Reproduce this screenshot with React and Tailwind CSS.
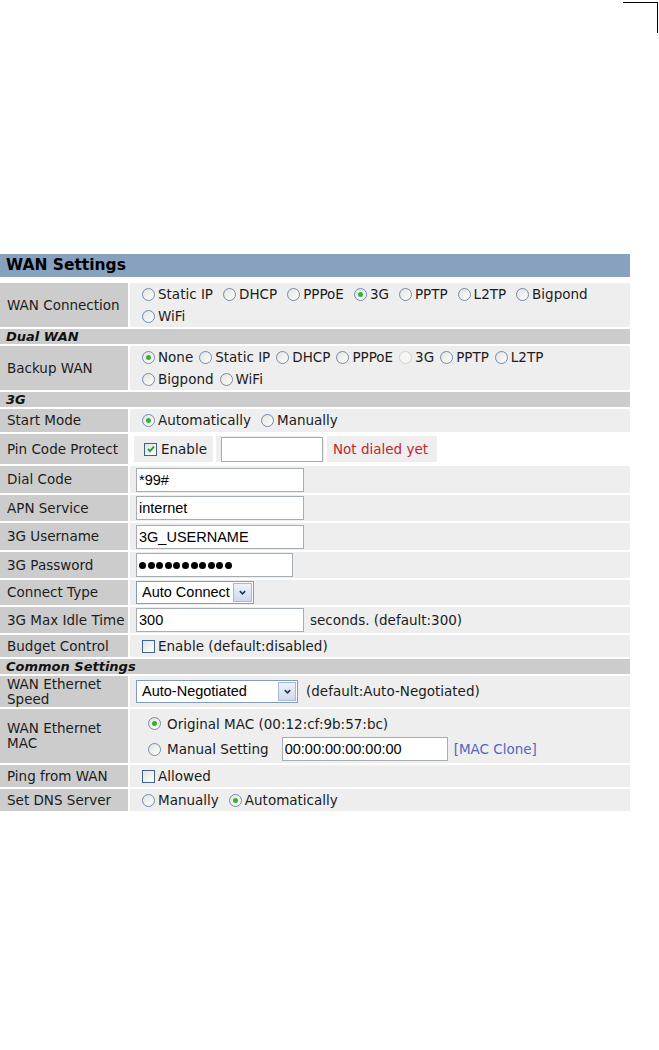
import React from "react";

function Radio({ checked, disabled }) {
  return (
    <span
      className={`inline-flex h-[13px] w-[13px] shrink-0 items-center justify-center rounded-full border ${
        disabled ? "border-[#d2d1ca] bg-[#f6f6f3]" : "border-[#6f8bb0] bg-[linear-gradient(135deg,#e2e2dd,#ffffff)]"
      }`}
    >
      {checked && <span className="h-[5px] w-[5px] rounded-full bg-[#36b036]" />}
    </span>
  );
}

function Check({ checked }) {
  return (
    <span className="inline-flex h-[13px] w-[13px] shrink-0 items-center justify-center border border-[#3f6390] bg-[linear-gradient(135deg,#e2e2dd,#ffffff)]">
      {checked && (
        <svg viewBox="0 0 11 11" className="h-[10px] w-[10px]">
          <path d="M2.2 5.4 L4.4 7.8 L8.8 2.8" stroke="#21a121" strokeWidth="2" fill="none" />
        </svg>
      )}
    </span>
  );
}

function Opt({ label, checked, disabled, gap }) {
  return (
    <span className={`inline-flex items-center ${gap ?? "gap-[3px]"}`}>
      <Radio checked={checked} disabled={disabled} />
      <span>{label}</span>
    </span>
  );
}

function TextInput({ value, w, h }) {
  return (
    <input
      readOnly
      value={value}
      className={`${w} ${h} border border-[#a5acb2] bg-white px-[2px] font-['Liberation_Sans',Arial,sans-serif] text-[14.5px] text-black outline-none`}
    />
  );
}

function Chevron() {
  return (
    <svg viewBox="0 0 10 10" className="h-[9px] w-[9px]">
      <path d="M2 3.5 L5 6.5 L8 3.5" stroke="#24385f" strokeWidth="1.8" fill="none" />
    </svg>
  );
}

function Select({ value, w, btn }) {
  return (
    <div className={`flex h-[23px] items-center border border-[#7f9db9] bg-white pl-[5px] ${w}`}>
      <span className="flex-1 font-['Liberation_Sans',Arial,sans-serif] text-[14.5px] leading-none text-black">{value}</span>
      <span className={`mr-[1px] flex h-[19px] items-center justify-center border border-[#a9b7d6] bg-[linear-gradient(180deg,#eef2fb,#cfd9ef)] ${btn}`}>
        <Chevron />
      </span>
    </div>
  );
}

function Row({ label, h, children, vcls }) {
  return (
    <div className={`flex gap-[2px] ${h}`}>
      <div className="flex w-[128px] shrink-0 items-center bg-[#cccccc] pl-[7px] leading-[15px]">{label}</div>
      <div className={`flex flex-1 ${vcls ?? "items-center bg-[#eeeeee] pl-[12px]"}`}>{children}</div>
    </div>
  );
}

function Section({ title }) {
  return (
    <div className="flex h-[15px] items-center bg-[#cccccc] pl-[6px] text-[13px] font-bold italic leading-none text-[#111]">
      {title}
    </div>
  );
}

export default function App() {
  return (
    <div className="min-h-[1050px] w-[659px] bg-white font-['DejaVu_Sans',Verdana,sans-serif] text-[13.5px] text-[#1c1c1c]">
      <div className="flex justify-end pr-[1px] pt-[2px]">
        <div className="h-[31px] w-[35px] border-r-[1.5px] border-t-[1.5px] border-black" />
      </div>

      <div className="mt-[221px] w-[630px]">
        <div className="flex h-[23px] items-center bg-[#87a1bf] pl-[6px] text-[15.5px] font-bold text-black">
          WAN Settings
        </div>

        <div className="mt-[6px] flex flex-col gap-[2px]">
          <Row label="WAN Connection" h="h-[44px]" vcls="flex-col justify-center bg-[#eeeeee] pl-[12px]">
            <div className="flex h-[22px] items-center gap-[10px]">
              <Opt label="Static IP" />
              <Opt label="DHCP" />
              <Opt label="PPPoE" />
              <Opt label="3G" checked />
              <Opt label="PPTP" />
              <Opt label="L2TP" />
              <Opt label="Bigpond" />
            </div>
            <div className="flex h-[22px] items-center gap-[10px]">
              <Opt label="WiFi" />
            </div>
          </Row>

          <Section title="Dual WAN" />

          <Row label="Backup WAN" h="h-[44px]" vcls="flex-col justify-center bg-[#eeeeee] pl-[12px]">
            <div className="flex h-[22px] items-center gap-[6px]">
              <Opt label="None" checked />
              <Opt label="Static IP" />
              <Opt label="DHCP" />
              <Opt label="PPPoE" />
              <Opt label="3G" disabled />
              <Opt label="PPTP" />
              <Opt label="L2TP" />
            </div>
            <div className="flex h-[22px] items-center gap-[6px]">
              <Opt label="Bigpond" />
              <Opt label="WiFi" />
            </div>
          </Row>

          <Section title="3G" />

          <Row label="Start Mode" h="h-[23px]" vcls="items-center gap-[10px] bg-[#eeeeee] pl-[12px]">
            <Opt label="Automatically" checked />
            <Opt label="Manually" />
          </Row>

          <Row label="Pin Code Protect" h="h-[30px]" vcls="items-center gap-[3px] bg-white pl-[4px]">
            <div className="flex h-[26px] w-[79px] items-center gap-[4px] bg-[#eeeeee] pl-[10px]">
              <Check checked />
              <span>Enable</span>
            </div>
            <div className="flex h-[26px] w-[108px] items-center bg-[#eeeeee] pl-[5px]">
              <TextInput value="" w="w-[102px]" h="h-[25px]" />
            </div>
            <div className="flex h-[26px] w-[110px] items-center bg-[#eeeeee] pl-[6px] text-[#c0262c]">
              Not dialed yet
            </div>
          </Row>

          <Row label="Dial Code" h="h-[27px]" vcls="items-center bg-[#eeeeee] pl-[6px]">
            <TextInput value="*99#" w="w-[168px]" h="h-[24px]" />
          </Row>

          <Row label="APN Service" h="h-[26px]" vcls="items-center bg-[#eeeeee] pl-[6px]">
            <TextInput value="internet" w="w-[168px]" h="h-[24px]" />
          </Row>

          <Row label="3G Username" h="h-[27px]" vcls="items-center bg-[#eeeeee] pl-[6px]">
            <TextInput value="3G_USERNAME" w="w-[168px]" h="h-[24px]" />
          </Row>

          <Row label="3G Password" h="h-[26px]" vcls="items-center bg-[#eeeeee] pl-[6px]">
            <div className="flex h-[24px] w-[157px] items-center gap-[1.6px] border border-[#a5acb2] bg-white pl-[2px]">
              {Array.from({ length: 11 }).map((_, i) => (
                <span key={i} className="h-[7px] w-[7px] rounded-full bg-black" />
              ))}
            </div>
          </Row>

          <Row label="Connect Type" h="h-[25px]" vcls="items-center bg-[#eeeeee] pl-[6px]">
            <Select value="Auto Connect" w="w-[118px]" btn="w-[19px]" />
          </Row>

          <Row label="3G Max Idle Time" h="h-[26px]" vcls="items-center bg-[#eeeeee] pl-[6px]">
            <TextInput value="300" w="w-[168px]" h="h-[24px]" />
            <span className="ml-[6px]">seconds. (default:300)</span>
          </Row>

          <Row label="Budget Control" h="h-[22px]" vcls="items-center gap-[3px] bg-[#eeeeee] pl-[12px]">
            <Check />
            <span>Enable (default:disabled)</span>
          </Row>

          <Section title="Common Settings" />

          <Row
            label={
              <span>
                WAN Ethernet
                <br />
                Speed
              </span>
            }
            h="h-[31px]"
            vcls="items-center bg-[#eeeeee] pl-[6px]"
          >
            <Select value="Auto-Negotiated" w="w-[162px]" btn="w-[18px]" />
            <span className="ml-[8px]">(default:Auto-Negotiated)</span>
          </Row>

          <Row
            label={
              <span>
                WAN Ethernet
                <br />
                MAC
              </span>
            }
            h="h-[54px]"
            vcls="flex-col bg-[#eeeeee] pl-[18px] pt-[3px]"
          >
            <div className="flex h-[24px] items-center">
              <Opt label="Original MAC (00:12:cf:9b:57:bc)" checked gap="gap-[6px]" />
            </div>
            <div className="flex h-[28px] items-center">
              <Opt label="Manual Setting" gap="gap-[6px]" />
              <span className="ml-[13px]">
                <TextInput value="00:00:00:00:00:00" w="w-[166px]" h="h-[24px]" />
              </span>
              <span className="ml-[6px] text-[#5366c0]">[MAC Clone]</span>
            </div>
          </Row>

          <Row label="Ping from WAN" h="h-[22px]" vcls="items-center gap-[3px] bg-[#eeeeee] pl-[12px]">
            <Check />
            <span>Allowed</span>
          </Row>

          <Row label="Set DNS Server" h="h-[22px]" vcls="items-center gap-[10px] bg-[#eeeeee] pl-[12px]">
            <Opt label="Manually" />
            <Opt label="Automatically" checked />
          </Row>
        </div>
      </div>
    </div>
  );
}
